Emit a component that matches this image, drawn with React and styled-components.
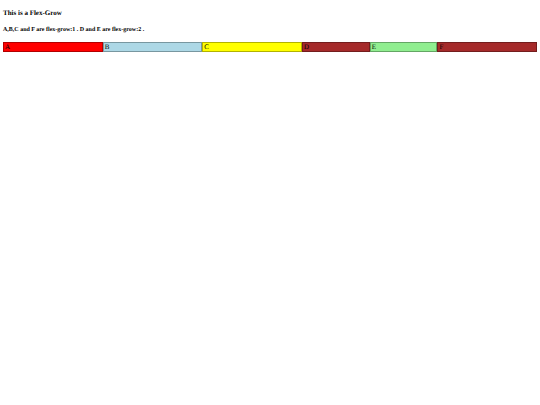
import React from 'react';
import styled, { createGlobalStyle } from 'styled-components';

const GlobalStyle = createGlobalStyle`
  body {
    margin: 0;
    padding: 9px 3px;
    background: white;
    color: black;
    font-family: "Liberation Serif", serif;
    text-rendering: geometricPrecision;
  }
`;

const Title = styled.h3`
  margin: 0 0 9px;
  font-size: 7px;
  line-height: 8px;
`;

const Note = styled.h5`
  margin: 0 0 8px;
  font-size: 6px;
  line-height: 8px;
`;

const Container = styled.div`
  display: flex;
`;

const Box = styled.div`
  flex: ${({ $grow }) => $grow} 1 0;
  box-sizing: border-box;
  padding: 0 1px;
  border: 1px solid rgba(0, 0, 0, 0.3);
  background: ${({ $color }) => $color};
  font-size: 7px;
  line-height: 8px;
`;

const boxes = [
  { name: 'A', color: 'red', grow: 3 },
  { name: 'B', color: 'lightblue', grow: 3 },
  { name: 'C', color: 'yellow', grow: 3 },
  { name: 'D', color: 'brown', grow: 2 },
  { name: 'E', color: 'lightgreen', grow: 2 },
  { name: 'F', color: 'brown', grow: 3 },
];

export default function App() {
  return (
    <>
      <GlobalStyle />
      <Title>This is a Flex-Grow</Title>
      <Note>A,B,C and F are flex-grow:1 . D and E are flex-grow:2 .</Note>
      <Container>
        {boxes.map((box) => (
          <Box key={box.name} $color={box.color} $grow={box.grow}>
            {box.name}
          </Box>
        ))}
      </Container>
    </>
  );
}
